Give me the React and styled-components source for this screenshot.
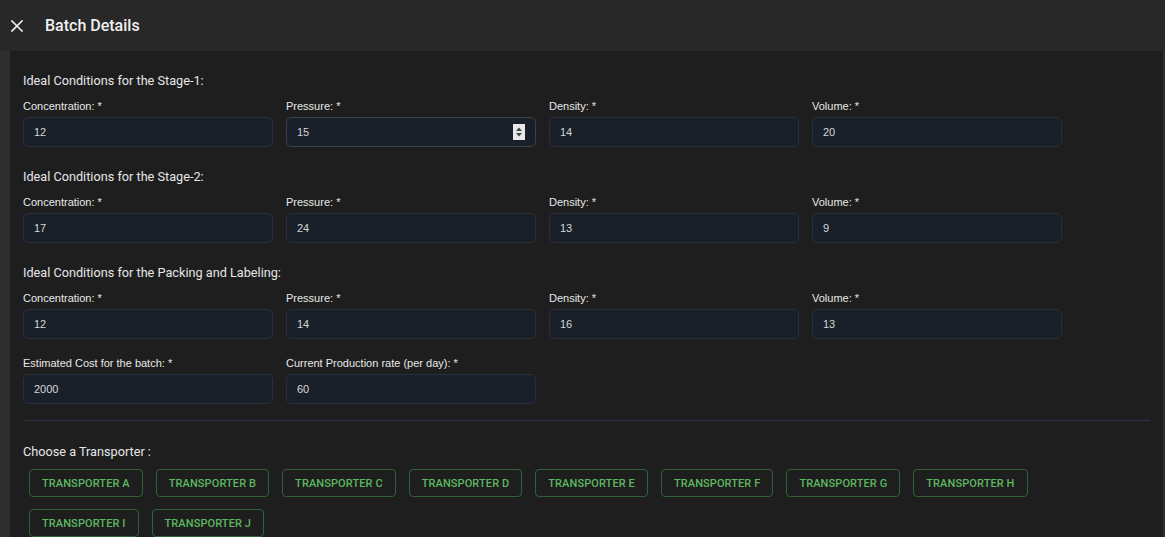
import React from 'react';
import styled, {createGlobalStyle} from 'styled-components';

const GlobalStyle = createGlobalStyle`
    html, body {
        margin: 0;
        padding: 0;
        background: #2a2a2a;
        font-family: Roboto, "Liberation Sans", Arial, sans-serif;
    }
    * {
        box-sizing: border-box;
    }
`;

const sections = [
    {title: 'Ideal Conditions for the Stage-1:', values: [12, 15, 14, 20], hover: 1},
    {title: 'Ideal Conditions for the Stage-2:', values: [17, 24, 13, 9]},
    {title: 'Ideal Conditions for the Packing and Labeling:', values: [12, 14, 16, 13]},
];

const fieldNames = ['Concentration:', 'Pressure:', 'Density:', 'Volume:'];

const transporters = ['A', 'B', 'C', 'D', 'E', 'F', 'G', 'H', 'I', 'J'];

const Field = ({label, value, hover}) => (
    <FieldBox>
        <Label>{label} *</Label>
        <InputWrap>
            <Input type="text" defaultValue={value} $hover={hover}/>
            {hover && (
                <Spinner>
                    <svg width="8" height="12" viewBox="0 0 8 12">
                        <path d="M4 1.5 L7 5 L1 5 Z" fill="#444"/>
                        <path d="M4 10.5 L7 7 L1 7 Z" fill="#444"/>
                    </svg>
                </Spinner>
            )}
        </InputWrap>
    </FieldBox>
);

const App = () => {
    return <Page>
        <GlobalStyle/>
        <Header>
            <CloseButton aria-label="close">
                <svg width="12" height="12" viewBox="0 0 12 12">
                    <path d="M1 1 L11 11 M11 1 L1 11" stroke="#f0f0f0" strokeWidth="1.6" strokeLinecap="square"/>
                </svg>
            </CloseButton>
            <Title>Batch Details</Title>
        </Header>
        <Body>
            <Panel>
                {sections.map((s, i) => (
                    <Section key={i}>
                        <SectionTitle>{s.title}</SectionTitle>
                        <Grid>
                            {fieldNames.map((f, j) => (
                                <Field key={f} label={f} value={s.values[j]} hover={s.hover === j}/>
                            ))}
                        </Grid>
                    </Section>
                ))}
                <CostGrid>
                    <Field label="Estimated Cost for the batch:" value={2000}/>
                    <Field label="Current Production rate (per day):" value={60}/>
                </CostGrid>
                <Divider/>
                <SectionTitle>Choose a Transporter :</SectionTitle>
                <ButtonRow>
                    {transporters.map(t => (
                        <TransporterButton key={t}>Transporter {t}</TransporterButton>
                    ))}
                </ButtonRow>
            </Panel>
        </Body>
    </Page>
}

export default App;

const Page = styled.div`
    width: 100%;
    height: 537px;
    overflow: hidden;
    background: #2a2a2a;
    display: flex;
    flex-direction: column;
`;

const Header = styled.div`
    height: 51px;
    flex-shrink: 0;
    background: #282828;
    display: flex;
    align-items: center;
    padding-left: 11px;
    gap: 22px;
`;

const CloseButton = styled.button`
    width: 12px;
    height: 12px;
    padding: 0;
    border: none;
    background: none;
    display: flex;
    align-items: center;
    justify-content: center;
    cursor: pointer;
`;

const Title = styled.div`
    color: #f0f0f0;
    font-size: 16px;
    font-weight: 500;
`;

const Body = styled.div`
    flex: 1;
    display: flex;
    padding-left: 10px;
    padding-right: 2px;
    background: #2e2e2e;
`;

const Panel = styled.div`
    flex: 1;
    background: #1e1e1e;
    padding: 22px 13px 0 13px;
`;

const Section = styled.div`
    margin-bottom: 22px;
`;

const SectionTitle = styled.div`
    color: #e6e6e6;
    font-size: 12.7px;
    line-height: 16px;
    margin-bottom: 10px;
`;

const Grid = styled.div`
    display: grid;
    grid-template-columns: repeat(4, 250px);
    column-gap: 13px;
`;

const CostGrid = styled(Grid)`
    margin-top: -5px;
`;

const FieldBox = styled.div`
    display: flex;
    flex-direction: column;
`;

const Label = styled.label`
    font-family: "Liberation Sans", Arial, sans-serif;
    font-size: 11px;
    line-height: 14px;
    color: #e8e8e8;
    margin-bottom: 4px;
`;

const InputWrap = styled.div`
    position: relative;
`;

const Input = styled.input`
    width: 100%;
    height: 30px;
    background: #19202a;
    border: 1px solid ${p => p.$hover ? '#3a414c' : '#28303b'};
    border-radius: 5px;
    color: #d6d6d6;
    font-family: "Liberation Sans", Arial, sans-serif;
    font-size: 11px;
    padding: 0 10px;
    outline: none;
`;

const Spinner = styled.div`
    position: absolute;
    right: 11px;
    top: 7px;
    width: 12px;
    height: 16px;
    background: #e8e8e8;
    display: flex;
    align-items: center;
    justify-content: center;
`;

const Divider = styled.div`
    height: 1px;
    background: #2a3444;
    margin: 16px 0 23px 0;
`;

const ButtonRow = styled.div`
    display: flex;
    flex-wrap: wrap;
    column-gap: 13px;
    row-gap: 12px;
    padding: 0 12px 0 6px;
    margin-top: -1px;
`;

const TransporterButton = styled.button`
    height: 28px;
    padding: 0 12px;
    background: transparent;
    border: 1px solid rgba(76, 175, 80, 0.45);
    border-radius: 4px;
    color: #5cb860;
    font-family: Roboto, sans-serif;
    font-size: 11px;
    font-weight: 500;
    letter-spacing: 0.1px;
    text-transform: uppercase;
    cursor: pointer;
`;
